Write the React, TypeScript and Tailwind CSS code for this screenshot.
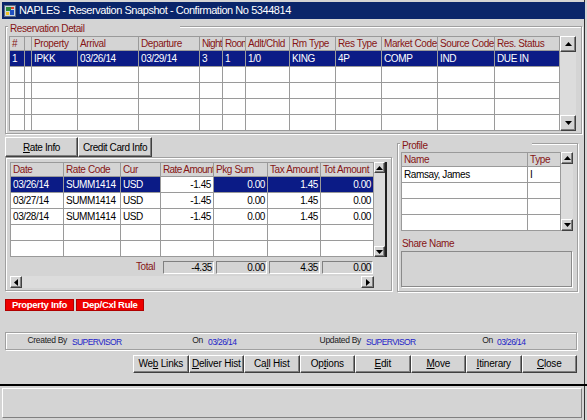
import React from 'react';

// bevel helpers (classic win32 look)
const RAISED =
  'border border-t-white border-l-white border-r-[#404040] border-b-[#404040] shadow-[inset_-1px_-1px_0_#808080]';
const ETCHED = 'border border-[#a0a0a0] shadow-[inset_1px_1px_0_#ffffff,1px_1px_0_#ffffff]';
const SUNKEN = 'border border-t-[#808080] border-l-[#808080] border-r-white border-b-white';

const CELL = 'border-r border-b border-[#9a9a9a] px-[2px] overflow-hidden whitespace-nowrap';
const HEAD = `${CELL} h-[14px] leading-[13px] text-[#861414] bg-[#d4d4d4]`;
const ROW = `${CELL} h-[16px] leading-[15px]`;

type Dir = 'up' | 'down' | 'left' | 'right';

function Tri({ dir }: { dir: Dir }) {
  const pts = { up: '0,4 7,4 3.5,0', down: '0,0 7,0 3.5,4', left: '4,0 4,7 0,3.5', right: '0,0 0,7 4,3.5' }[dir];
  const v = dir === 'up' || dir === 'down';
  return (
    <svg width={v ? 7 : 4} height={v ? 4 : 7} viewBox={v ? '0 0 7 4' : '0 0 4 7'}>
      <polygon points={pts} fill="#000" />
    </svg>
  );
}

function VScroll({ className }: { className: string }) {
  return (
    <div className={`flex flex-col bg-[#dcdcdc] ${className}`}>
      <div className={`${RAISED} bg-[#d4d4d4] aspect-square shrink-0 flex items-center justify-center`}>
        <Tri dir="up" />
      </div>
      <div className="flex-1" />
      <div className={`${RAISED} bg-[#d4d4d4] aspect-square shrink-0 flex items-center justify-center`}>
        <Tri dir="down" />
      </div>
    </div>
  );
}

function GroupLabel({ text, w }: { text: string; w: string }) {
  return (
    <span className={`absolute -top-[4px] left-[2px] ${w} bg-[#d4d4d4] pl-[2px] text-[10px] leading-[12px] tracking-[-0.4px] text-[#861414]`}>
      {text}
    </span>
  );
}

const RES_HEAD = ['#', '', 'Property', 'Arrival', 'Departure', 'Night', 'Room', 'Adlt/Chld', 'Rm Type', 'Res Type', 'Market Code', 'Source Code', 'Res. Status'];
const RES_ROW = ['1', '', 'IPKK', '03/26/14', '03/29/14', '3', '1', '1/0', 'KING', '4P', 'COMP', 'IND', 'DUE IN'];

const RATE_HEAD = ['Date', 'Rate Code', 'Cur', 'Rate Amount', 'Pkg Sum', 'Tax Amount', 'Tot Amount'];
const RATE_ROWS = [
  ['03/26/14', 'SUMM1414', 'USD', '-1.45', '0.00', '1.45', '0.00'],
  ['03/27/14', 'SUMM1414', 'USD', '-1.45', '0.00', '1.45', '0.00'],
  ['03/28/14', 'SUMM1414', 'USD', '-1.45', '0.00', '1.45', '0.00'],
  ['', '', '', '', '', '', ''],
  ['', '', '', '', '', '', ''],
];

function Mn({ pre, u, post }: { pre?: string; u: string; post?: string }) {
  return (
    <span>
      {pre}
      <span className="underline underline-offset-[1px]">{u}</span>
      {post}
    </span>
  );
}

const BUTTONS: [string | undefined, string, string | undefined][] = [
  ['We', 'b', ' Links'],
  [undefined, 'D', 'eliver Hist'],
  ['Ca', 'l', 'l Hist'],
  ['Op', 't', 'ions'],
  [undefined, 'E', 'dit'],
  [undefined, 'M', 'ove'],
  [undefined, 'I', 'tinerary'],
  [undefined, 'C', 'lose'],
];

export default function App() {
  return (
    <div className="w-[587px] h-[420px] bg-[#d4d4d4] flex flex-col overflow-hidden font-['Liberation_Sans',Arial,sans-serif] text-black shadow-[inset_-2px_0_0_#d4d4d4,inset_-3px_0_0_#303030] pt-[2px]">
      {/* title bar */}
      <div className="mx-[2px] h-[17px] bg-[#0a256a] flex items-center gap-[3px] pl-[2px] shrink-0">
        <svg width="12" height="12" viewBox="0 0 12 12">
          <rect x="0.5" y="0.5" width="11" height="11" fill="#c8d4e0" stroke="#5a6a80" />
          <rect x="2" y="2" width="5" height="4" fill="#2a8a3a" />
          <rect x="6" y="5" width="4" height="5" fill="#2050c0" />
          <rect x="2" y="7" width="3" height="3" fill="#f0c020" />
          <path d="M7 2h3v2H7z" fill="#e04020" />
        </svg>
        <span className="text-white text-[11px] leading-[15px] tracking-[-0.45px]">
          NAPLES - Reservation Snapshot - Confirmation No 5344814
        </span>
      </div>

      {/* main body */}
      <div className="px-[5px] flex flex-col text-[10px] tracking-[-0.4px]">
        {/* Reservation Detail */}
        <div className={`relative mt-[7px] w-[577px] h-[108px] ${ETCHED} pl-[3px] pt-[9px]`}>
          <GroupLabel text="Reservation Detail" w="w-[172px]" />
          <div className="flex">
            <div className="grid grid-cols-[15px_7px_46px_61px_61px_23px_23px_44px_46px_46px_56px_57px_65px] border-l border-t border-[#9a9a9a] bg-white">
              {RES_HEAD.map((h, i) => (
                <div key={`h${i}`} className={`${HEAD} ${i === 5 || i === 6 ? 'tracking-[-0.7px] px-[1px]' : ''}`}>{h}</div>
              ))}
              {RES_ROW.map((c, i) => (
                <div key={`r${i}`} className={`${ROW} bg-[#0b1b86] text-white`}>{c}</div>
              ))}
              {Array.from({ length: 4 * RES_HEAD.length }).map((_, i) => (
                <div key={`e${i}`} className={ROW} />
              ))}
            </div>
            <VScroll className="w-[16px]" />
          </div>
        </div>

        {/* middle row */}
        <div className="mt-[3px] h-[155px] flex">
          <div className="w-[387px] flex flex-col">
            <div className="h-[20px] flex">
              <div className={`${RAISED} w-[73px] flex items-center justify-center`}>
                <Mn u="R" post="ate Info" />
              </div>
              <div className={`${RAISED} w-[74px] flex items-center justify-center`}>Credit Card Info</div>
            </div>
            <div className={`h-[134px] ${ETCHED} pl-[4px] pt-[4px]`}>
              <div className="flex">
                <div className="grid grid-cols-[53px_57px_40px_53px_54px_53px_53px] border-l border-t border-[#9a9a9a] bg-white">
                  {RATE_HEAD.map((h, i) => (
                    <div key={`h${i}`} className={`${HEAD} ${i === 3 ? 'tracking-[-0.6px]' : ''}`}>{h}</div>
                  ))}
                  {RATE_ROWS.map((r, ri) =>
                    r.map((c, ci) => {
                      const sel = ri === 0 && ci !== 3;
                      return (
                        <div
                          key={`${ri}-${ci}`}
                          className={`${ROW} ${ci >= 3 ? 'text-right' : ''} ${sel ? 'bg-[#0b1b86] text-white' : ''}`}
                        >
                          {c}
                        </div>
                      );
                    })
                  )}
                </div>
                <VScroll className="w-[13px] border-r-2 border-r-[#202020]" />
              </div>
              <div className="mt-[4px] h-[13px] flex">
                <div className="w-[145px] text-right text-[#861414] leading-[12px]">Total</div>
                <div className="ml-[8px] flex gap-[2px]">
                  {['-4.35', '0.00', '4.35', '0.00'].map((t, i) => (
                    <div key={i} className={`w-[51px] h-[13px] ${SUNKEN} text-right pr-[1px] leading-[11px]`}>{t}</div>
                  ))}
                </div>
              </div>
              <div className="mt-[2px] h-[12px] w-[364px] flex bg-[#dcdcdc]">
                <div className={`${RAISED} w-[12px] bg-[#d4d4d4] flex items-center justify-center`}>
                  <Tri dir="left" />
                </div>
                <div className="flex-1" />
                <div className={`${RAISED} w-[13px] bg-[#d4d4d4] flex items-center justify-center`}>
                  <Tri dir="right" />
                </div>
              </div>
            </div>
          </div>

          {/* Profile */}
          <div className={`relative ml-[5px] mt-[6px] w-[181px] h-[149px] ${ETCHED} pl-[3px] pt-[8px]`}>
            <GroupLabel text="Profile" w="w-[132px]" />
            <div className="flex">
              <div className="grid grid-cols-[126px_33px] border-l border-t border-[#9a9a9a] bg-white">
                <div className={HEAD}>Name</div>
                <div className={HEAD}>Type</div>
                <div className={ROW}>Ramsay, James</div>
                <div className={ROW}>I</div>
                {Array.from({ length: 6 }).map((_, i) => (
                  <div key={i} className={ROW} />
                ))}
              </div>
              <VScroll className="w-[12px]" />
            </div>
            <div className="mt-[7px] h-[12px] leading-[12px] pl-[1px] text-[#861414]">Share Name</div>
            <div className="mt-[1px] w-[171px] h-[36px] border border-[#8a8a8a] shadow-[1px_1px_0_#ffffff]" />
          </div>
        </div>

        {/* red links */}
        <div className="mt-[7px] h-[12px] flex gap-[2px] tracking-[-0.3px]">
          <div className="w-[69px] bg-[#ee0000] border border-[#b00000] text-white font-bold text-[9.5px] leading-[10px] flex items-center justify-center">
            Property Info
          </div>
          <div className="w-[68px] bg-[#ee0000] border border-[#b00000] text-white font-bold text-[9.5px] leading-[10px] flex items-center justify-center">
            Dep/Cxl Rule
          </div>
        </div>

        {/* created / updated */}
        <div className={`mt-[21px] h-[18px] w-[572px] ${ETCHED} flex items-center text-[8.5px] tracking-[-0.3px] text-[#202020]`}>
          <span className="w-[61px] text-right -mt-[2px]">Created By</span>
          <span className="ml-[5px] w-[116px] text-[#2323c8] tracking-[-0.6px] mt-[2px]">SUPERVISOR</span>
          <span className="w-[15px] text-right -mt-[2px]">On</span>
          <span className="ml-[5px] w-[107px] text-[#2323c8] tracking-[-0.6px] mt-[2px]">03/26/14</span>
          <span className="w-[46px] text-right -mt-[2px]">Updated By</span>
          <span className="ml-[5px] w-[112px] text-[#2323c8] tracking-[-0.6px] mt-[2px]">SUPERVISOR</span>
          <span className="w-[15px] text-right -mt-[2px]">On</span>
          <span className="ml-[4px] text-[#2323c8] tracking-[-0.6px] mt-[2px]">03/26/14</span>
        </div>

        {/* action buttons */}
        <div className="mt-[5px] h-[18px] w-[572px] flex justify-end">
          <div className="w-[444px] grid grid-cols-8 tracking-[-0.2px]">
            {BUTTONS.map(([pre, u, post], i) => (
              <div key={i} className={`${RAISED} flex items-center justify-center leading-[14px]`}>
                <Mn pre={pre} u={u} post={post} />
              </div>
            ))}
          </div>
        </div>
      </div>

      {/* status strip */}
      <div className="mt-[11px] h-[36px] border-t-2 border-black shrink-0 pr-[3px]">
        <div className="mx-[2px] mt-[2px] h-[30px] border border-t-white border-l-white border-r-[#808080] border-b-[#808080]" />
      </div>
    </div>
  );
}
